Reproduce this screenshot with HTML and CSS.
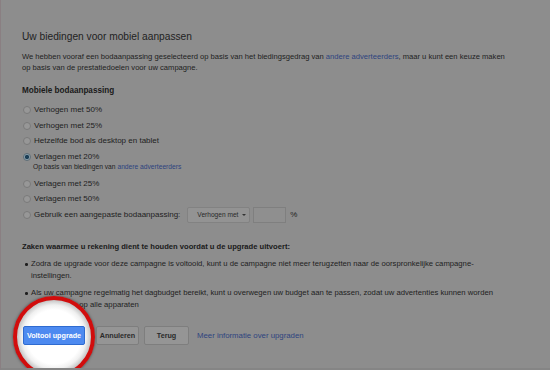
FILE: index.html
```html
<!DOCTYPE html>
<html lang="nl">
<head>
<meta charset="utf-8">
<link rel="stylesheet" href="styles.css">
</head>
<body>
<div class="page">
  <h1 class="title">Uw biedingen voor mobiel aanpassen</h1>
  <p class="intro">We hebben vooraf een bodaanpassing geselecteerd op basis van het biedingsgedrag van <a class="link">andere adverteerders</a>, maar u kunt een keuze maken op basis van de prestatiedoelen voor uw campagne.</p>
  <h2 class="subhead">Mobiele bodaanpassing</h2>
  <div class="options">
    <div class="opt"><span class="radio"></span>Verhogen met 50%</div>
    <div class="opt"><span class="radio"></span>Verhogen met 25%</div>
    <div class="opt"><span class="radio"></span>Hetzelfde bod als desktop en tablet</div>
    <div class="opt"><span class="radio checked"></span>Verlagen met 20%</div>
    <div class="note">Op basis van biedingen van <a class="link">andere adverteerders</a></div>
    <div class="opt"><span class="radio"></span>Verlagen met 25%</div>
    <div class="opt"><span class="radio"></span>Verlagen met 50%</div>
    <div class="opt custom"><span class="radio"></span>Gebruik een aangepaste bodaanpassing:<span class="select">Verhogen met <span class="caret"></span></span><span class="input"></span><span class="pct">%</span></div>
  </div>
  <h2 class="subhead warn">Zaken waarmee u rekening dient te houden voordat u de upgrade uitvoert:</h2>
  <ul class="bullets">
    <li>Zodra de upgrade voor deze campagne is voltooid, kunt u de campagne niet meer terugzetten naar de oorspronkelijke campagne-instellingen.</li>
    <li>Als uw campagne regelmatig het dagbudget bereikt, kunt u overwegen uw budget aan te passen, zodat uw advertenties kunnen worden weergegeven op alle apparaten</li>
  </ul>
  <div class="actions">
    <span class="spot"></span>
    <span class="btn primary">Voltooi upgrade</span>
    <span class="btn cancel">Annuleren</span>
    <span class="btn back">Terug</span>
    <a class="link more">Meer informatie over upgraden</a>
  </div>
</div>
</body>
</html>
```
FILE: styles.css
```css
html, body {
  margin: 0;
  padding: 0;
}
body {
  width: 550px;
  height: 370px;
  overflow: hidden;
  background: #8d8d8d;
  font-family: "Liberation Sans", Arial, sans-serif;
  font-size: 8px;
  color: #1e1e1e;
  box-sizing: border-box;
  border-left: 1px solid #8a7f82;
  border-bottom: 2px solid #858585;
}
.page {
  width: 487px;
  padding: 30px 0 0 21px;
  position: relative;
}
.title {
  margin: 0;
  font-size: 10.2px;
  font-weight: normal;
  line-height: 14px;
  color: #1f1f1f;
}
.intro {
  margin: 7px 0 0;
  font-size: 7.6px;
  line-height: 11px;
}
.link {
  color: #2d447f;
}
.subhead {
  margin: 12px 0 0;
  font-size: 8.15px;
  font-weight: bold;
  line-height: 12px;
  color: #1a1a1a;
}
.options {
  margin-top: 5px;
}
.opt {
  display: flex;
  align-items: center;
  height: 15.7px;
  line-height: 12px;
  white-space: nowrap;
}
.radio {
  width: 6px;
  height: 6px;
  border-radius: 50%;
  border: 1px solid #7a7a7a;
  background: #979797;
  margin: 0 3px 0 1px;
  box-sizing: content-box;
  flex: none;
}
.radio.checked {
  background: radial-gradient(circle, #1d3f56 0 1.8px, #8aa0ad 2.4px);
  border-color: #5f6f78;
}
.note {
  font-size: 6.7px;
  line-height: 10px;
  padding-left: 11px;
  margin-top: -3px;
  margin-bottom: 4px;
}
.opt.custom {
  height: 16px;
}
.select {
  display: inline-flex;
  align-items: center;
  height: 16px;
  width: 63px;
  box-sizing: border-box;
  margin-left: 7px;
  padding: 0 0 0 9px;
  border: 1px solid #828282;
  border-radius: 2px;
  background: #939393;
  font-size: 6.6px;
  color: #2a2a2a;
}
.caret {
  width: 0;
  height: 0;
  margin-left: 4px;
  border-left: 2.5px solid transparent;
  border-right: 2.5px solid transparent;
  border-top: 2.5px solid #333;
}
.input {
  width: 33px;
  height: 16px;
  box-sizing: border-box;
  margin-left: 3px;
  border: 1px solid #7f7f7f;
  background: #8f8f8f;
}
.pct {
  margin-left: 4px;
}
.warn {
  margin-top: 18px;
  font-size: 7.6px;
}
.bullets {
  margin: 5px 0 0;
  padding: 0 0 0 9px;
  list-style: none;
  font-size: 7.7px;
}
.bullets li {
  position: relative;
  line-height: 12px;
  margin-bottom: 5px;
}
.bullets li::before {
  content: "";
  position: absolute;
  left: -6px;
  top: 5px;
  width: 2.5px;
  height: 2.5px;
  border-radius: 50%;
  background: #1e1e1e;
}
.actions {
  position: relative;
  display: flex;
  align-items: center;
  margin-top: 15px;
  white-space: nowrap;
}
.spot {
  position: absolute;
  left: -9px;
  top: -30px;
  width: 82px;
  height: 82px;
  box-sizing: border-box;
  border-radius: 50%;
  border: 4px solid #d10d0d;
  background: radial-gradient(circle, #ffffff 0 27px, #f0f0f0 32px, #c4c4c4 37px);
  box-shadow: 0 0 3px rgba(0,0,0,0.5);
}
.btn {
  position: relative;
  height: 19px;
  box-sizing: border-box;
  padding: 0;
  display: inline-flex;
  align-items: center;
  justify-content: center;
  border: 1px solid #7e7e7e;
  border-radius: 2px;
  background: #959595;
  font-weight: bold;
  font-size: 7.2px;
  color: #2a2a2a;
}
.btn.primary {
  width: 62px;
  margin-left: 1px;
  margin-right: 11px;
  background: #4d8af0;
  border-color: #2f6bd0;
  color: #ffffff;
  z-index: 1;
}
.btn.cancel {
  width: 43px;
  margin-right: 5px;
}
.btn.back {
  width: 45px;
  margin-right: 8px;
}
.more {
  font-size: 7.8px;
}
```
